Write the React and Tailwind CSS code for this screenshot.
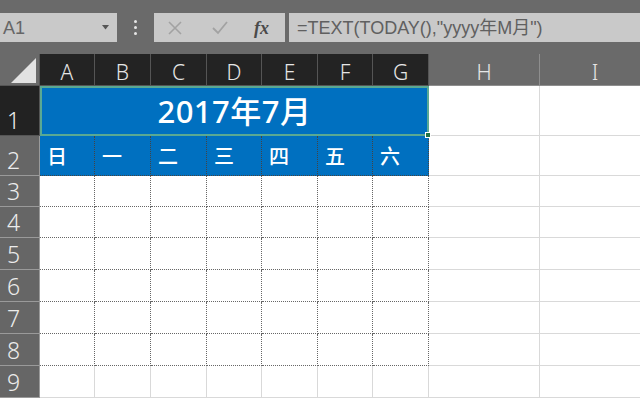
import React from "react";

const cols = ["A", "B", "C", "D", "E", "F", "G"];
const days = ["日", "一", "二", "三", "四", "五", "六"];
const font = { fontFamily: '"Noto Sans", "Noto Sans CJK SC", sans-serif' };

function RowHead({ n, dark }) {
  return (
    <div
      className={`flex items-end pl-[7px] pb-[1px] text-[23px] leading-none font-light text-[#ececec] border-b border-r ${
        dark ? "bg-[#222222] border-[#555555]" : "bg-[#666666] border-[#9a9a9a]"
      }`}
      style={{ ...font }}
    >
      <span className="pb-[2px]">{n}</span>
    </div>
  );
}

export default function App() {
  return (
    <div className="w-[640px] h-[399px] overflow-hidden bg-white" style={font}>
      {/* formula bar */}
      <div className="h-[54px] bg-[#6a6a6a] flex items-start pt-[13px]">
        <div className="w-[117px] h-[29px] bg-[#c9c9c9] flex items-center justify-between pl-[3px] pr-[8px]">
          <span className="text-[18px] text-[#666666] leading-none" style={{ fontFamily: '"Liberation Sans", sans-serif' }}>A1</span>
          <svg width="7" height="5" viewBox="0 0 7 5"><path d="M0 0 L7 0 L3.5 4.5 Z" fill="#555" /></svg>
        </div>
        <div className="w-[37px] h-[29px] flex flex-col items-center justify-center gap-[3px]">
          <div className="w-[3px] h-[3px] bg-[#e6e6e6] rounded-full" />
          <div className="w-[3px] h-[3px] bg-[#e6e6e6] rounded-full" />
          <div className="w-[3px] h-[3px] bg-[#e6e6e6] rounded-full" />
        </div>
        <div className="w-[131px] h-[29px] bg-[#c9c9c9] flex items-center">
          <svg className="ml-[14px]" width="14" height="14" viewBox="0 0 14 14">
            <path d="M1 1 L13 13 M13 1 L1 13" stroke="#a2a2a2" strokeWidth="1.6" />
          </svg>
          <svg className="ml-[30px]" width="16" height="14" viewBox="0 0 16 14">
            <path d="M1 7 L6 12 L15 1" stroke="#a2a2a2" strokeWidth="1.8" fill="none" />
          </svg>
          <span
            className="ml-[26px] text-[18px] italic font-bold text-[#4a4a4a] leading-none"
            style={{ fontFamily: '"Liberation Serif", serif' }}
          >
            fx
          </span>
        </div>
        <div className="ml-[4px] flex-1 h-[29px] bg-[#c9c9c9] flex items-center pl-[8px]">
          <span
            className="text-[18px] text-[#606060] leading-none"
            style={{ fontFamily: '"Liberation Sans", "Noto Sans CJK SC", sans-serif' }}
          >
            =TEXT(TODAY(),"yyyy年M月")
          </span>
        </div>
      </div>

      {/* sheet grid */}
      <div
        className="grid"
        style={{
          gridTemplateColumns: "40px 55px 56px 56px 55px 56px 55px 56px 111px 111px",
          gridTemplateRows: "32px 50px 40px 31px 31px 32px 32px 32px 32px 32px",
        }}
      >
        {/* header row */}
        <div className="bg-[#6a6a6a] border-r border-b border-[#555555] relative">
          <svg className="absolute left-[11px] top-[4px]" width="25" height="25" viewBox="0 0 25 25">
            <path d="M0 25 L25 0 L25 25 Z" fill="#e2e2e2" />
          </svg>
        </div>
        {cols.map((c) => (
          <div
            key={c}
            className="bg-[#232323] border-r border-b border-[#555555] flex items-center justify-center pt-[6px] text-[21px] font-light text-[#e6e6e6] leading-none"
          >
            {c}
          </div>
        ))}
        {["H", "I"].map((c) => (
          <div
            key={c}
            className="bg-[#6a6a6a] border-r border-b border-[#8e8e8e] flex items-center justify-center pt-[6px] text-[21px] font-light text-[#e6e6e6] leading-none"
          >
            {c}
          </div>
        ))}

        {/* row 1 */}
        <RowHead n="1" dark />
        <div className="col-span-7 relative bg-[#0070c0] border-2 border-[#5aa993] flex items-center justify-center">
          <span className="text-[31px] font-medium text-white leading-none tracking-[0.5px]" style={{ fontFamily: '"Noto Sans", "Noto Sans CJK SC", sans-serif' }}>
            2017年7月
          </span>
          <div className="absolute right-[-4px] bottom-[-4px] w-[6px] h-[6px] bg-[#217346] border border-white z-10" />
        </div>
        <div className="border-r border-b border-[#d9d9d9]" />
        <div className="border-r border-b border-[#d9d9d9]" />

        {/* row 2 */}
        <RowHead n="2" />
        {days.map((d) => (
          <div
            key={d}
            className="bg-[#0070c0] border-r border-b border-dotted border-[#444444] flex items-center pl-[7px] text-[20px] font-medium text-white leading-none"
            style={{ fontFamily: '"Noto Sans CJK SC", sans-serif' }}
          >
            {d}
          </div>
        ))}
        <div className="border-r border-b border-[#d9d9d9]" />
        <div className="border-r border-b border-[#d9d9d9]" />

        {/* rows 3-9 */}
        {[3, 4, 5, 6, 7, 8, 9].map((r) => (
          <React.Fragment key={r}>
            <RowHead n={String(r)} />
            {cols.map((c) =>
              r < 9 ? (
                <div key={c} className="border-r border-b border-dotted border-[#666666]" />
              ) : (
                <div key={c} className="border-r border-b border-[#d9d9d9]" />
              )
            )}
            <div className="border-r border-b border-[#d9d9d9]" />
            <div className="border-r border-b border-[#d9d9d9]" />
          </React.Fragment>
        ))}
      </div>
    </div>
  );
}
